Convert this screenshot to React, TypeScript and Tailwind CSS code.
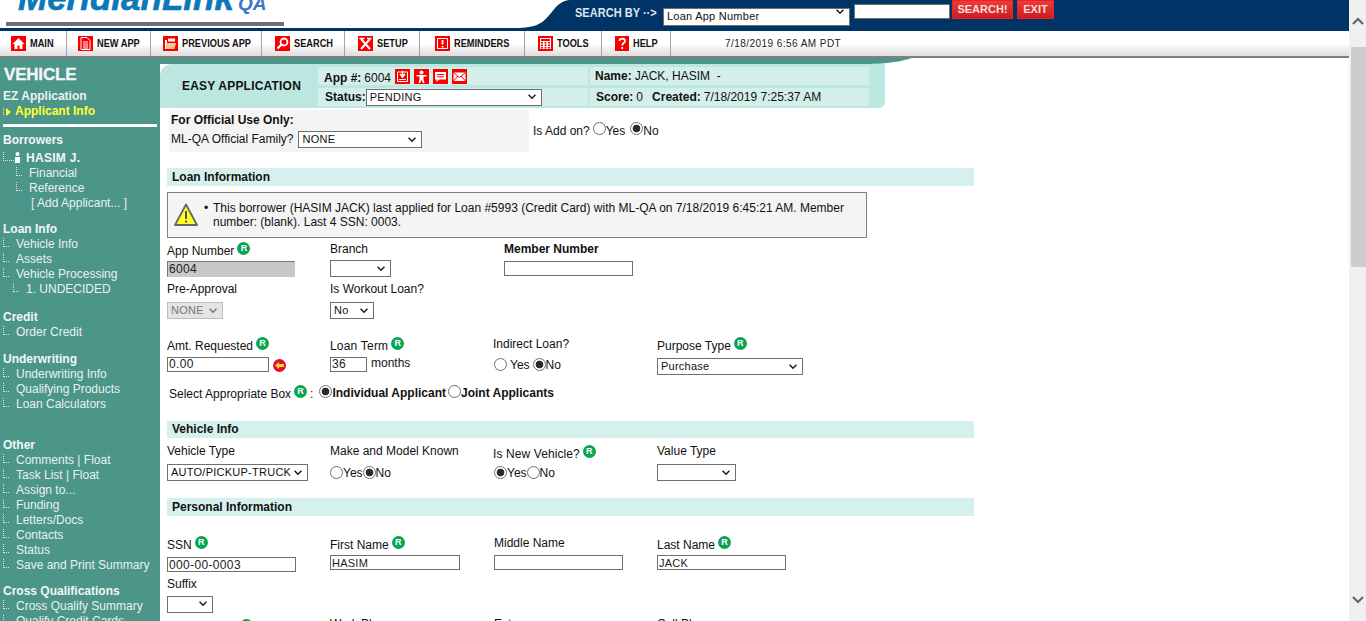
import type { ReactNode } from 'react';

// ----------------------------------------------------------------------------
// Small form bits
// ----------------------------------------------------------------------------

function RBadge({ className = '' }: { className?: string }) {
  return (
    <span
      className={`inline-flex h-[13px] w-[13px] -translate-y-[2px] items-center justify-center rounded-full bg-[#0aa552] text-[9px] font-bold leading-none text-white ${className}`}
    >
      R
    </span>
  );
}

function Label({ children, r, bold, className = '' }: { children: ReactNode; r?: boolean; bold?: boolean; className?: string }) {
  return (
    <div className={`flex h-[14px] items-center gap-[3px] whitespace-nowrap text-xs leading-[14px] text-[#111] ${bold ? 'font-bold' : ''} ${className}`}>
      <span className="translate-y-[1px]">{children}</span>
      {r && <RBadge />}
    </div>
  );
}

function Select({ value, className = '', disabled }: { value: string; className?: string; disabled?: boolean }) {
  return (
    <div className={`relative ${className}`}>
      <select
        disabled={disabled}
        defaultValue={value}
        className={`h-full w-full appearance-none rounded-none border pl-[3px] text-[11px] leading-none tracking-[0.25px] outline-none ${
          disabled ? 'border-[#bdbdbd] bg-[#e4e4e4] text-[#777]' : 'border-[#6f6f6f] bg-white text-[#111]'
        }`}
      >
        <option value={value}>{value}</option>
      </select>
      <svg viewBox="0 0 10 7" className="pointer-events-none absolute right-[5px] top-1/2 h-[6px] w-[10px] -translate-y-1/2" fill="none">
        <path d="M1 1l4 4 4-4" stroke={disabled ? '#777' : '#1a1a1a'} strokeWidth="1.7" />
      </svg>
    </div>
  );
}

function TextInput({ value = '', className = '', gray, digits }: { value?: string; className?: string; gray?: boolean; digits?: boolean }) {
  return (
    <input
      readOnly
      value={value}
      className={`rounded-none border px-[1px] leading-none text-[#222] outline-none ${digits ? 'text-xs tracking-[0.35px]' : 'text-[11px] tracking-[0.25px]'} ${
        gray ? 'border-[#c8c8c8] border-l-[#777] border-t-[#777] bg-[#c8c8c8]' : 'border-[#6f6f6f] bg-white'
      } ${className}`}
    />
  );
}

function Radio({ name, checked, className = '' }: { name: string; checked?: boolean; className?: string }) {
  return (
    <input
      type="radio"
      name={name}
      defaultChecked={checked}
      className={`h-[13px] w-[13px] shrink-0 appearance-none rounded-full border border-[#6f6f6f] bg-white checked:bg-[radial-gradient(circle,#2b2b2b_0,#2b2b2b_3.5px,#fff_4.2px)] ${className}`}
    />
  );
}

function SectionBar({ title, className = '' }: { title: string; className?: string }) {
  return (
    <div className={`w-[807px] bg-[#d6f1ed] pl-[5px] text-xs font-bold text-[#111] ${className}`}>{title}</div>
  );
}

// ----------------------------------------------------------------------------
// Header
// ----------------------------------------------------------------------------

function RedIcon({ children, className = 'w-[15px]' }: { children: ReactNode; className?: string }) {
  return (
    <svg viewBox="0 0 15 15" className={`h-[15px] shrink-0 bg-[#f80000] ${className}`} fill="none">
      {children}
    </svg>
  );
}

const NAV_ITEMS: { label: string; width: string; pad: string; icon: ReactNode }[] = [
  {
    label: 'MAIN',
    width: 'w-[67px]',
    pad: 'pl-[11px]',
    icon: (
      <RedIcon>
        <path d="M7.5 2L1.5 8h2v5h3V9.5h2V13h3V8h2z" fill="#fff" />
      </RedIcon>
    ),
  },
  {
    label: 'NEW APP',
    width: 'w-[84px]',
    pad: 'pl-[11px]',
    icon: (
      <RedIcon>
        <path d="M3 1.5h6l3 3v9H3z" stroke="#fff" />
        <path d="M5 6h5M5 8h5M5 10h5M5 12h5" stroke="#fff" />
      </RedIcon>
    ),
  },
  {
    label: 'PREVIOUS APP',
    width: 'w-[111px]',
    pad: 'pl-[12px]',
    icon: (
      <RedIcon>
        <path d="M2 4h2v9H2z" fill="#fff" />
        <path d="M5 2.5h7v3H5z" fill="#fff" />
        <path d="M3 7h10l-1.5 6H3z" fill="#ffc58a" />
      </RedIcon>
    ),
  },
  {
    label: 'SEARCH',
    width: 'w-[83px]',
    pad: 'pl-[13px]',
    icon: (
      <RedIcon>
        <circle cx="9" cy="6" r="3.5" stroke="#fff" strokeWidth="1.8" />
        <path d="M6.5 8.5L2.5 12.5" stroke="#fff" strokeWidth="2.2" />
      </RedIcon>
    ),
  },
  {
    label: 'SETUP',
    width: 'w-[75px]',
    pad: 'pl-[13px]',
    icon: (
      <RedIcon>
        <path d="M3 3l9 10M12 3L3 13" stroke="#fff" strokeWidth="2" />
        <path d="M1.5 2.5h5M9 2.5h4.5" stroke="#fff" strokeWidth="1.5" />
      </RedIcon>
    ),
  },
  {
    label: 'REMINDERS',
    width: 'w-[105px]',
    pad: 'pl-[15px]',
    icon: (
      <RedIcon>
        <path d="M2.5 2.5h10v10h-10z" stroke="#fff" />
        <path d="M7.5 4v4.5M7.5 10v1.5" stroke="#fff" strokeWidth="1.8" />
      </RedIcon>
    ),
  },
  {
    label: 'TOOLS',
    width: 'w-[77px]',
    pad: 'pl-[13px]',
    icon: (
      <RedIcon>
        <path d="M2 2h11v11H2z" fill="#fff" />
        <path d="M3 3h9v2H3zM3 6h2v1.5H3zM6.5 6h2v1.5h-2zM10 6h2v1.5h-2zM3 8.5h2V10H3zM6.5 8.5h2V10h-2zM10 8.5h2V10h-2zM3 11h2v1.5H3zM6.5 11h2v1.5h-2zM10 11h2v1.5h-2z" fill="#f80000" />
      </RedIcon>
    ),
  },
  {
    label: 'HELP',
    width: 'w-[69px]',
    pad: 'pl-[13px]',
    icon: (
      <svg viewBox="0 0 14 15" className="h-[15px] w-[14px] shrink-0 bg-[#f80000]" fill="none">
        <path d="M4.5 5c0-3.200 5.500-3.200 5.500 0 0 2-2.800 2-2.800 4.500" stroke="#fff" strokeWidth="1.7" />
        <path d="M7.200 11v2" stroke="#fff" strokeWidth="1.8" />
      </svg>
    ),
  },
];

function Header() {
  return (
    <header>
      {/* Logo + search strip */}
      <div className="flex h-[28px]">
        <div className="w-[515px] overflow-hidden">
          <div className="-mt-[24px] flex h-[44px] items-baseline pl-[18px] italic">
            <span className="text-[35px] font-bold leading-[44px] text-[#0b78b8] [-webkit-text-stroke:0.6px_#0b78b8]">MeridianLink</span>
            <span className="ml-[4px] text-[19px] font-bold text-[#3a77c4]">QA</span>
          </div>
          <div className="ml-[6px] mt-[2px] h-[4px] w-[278px] bg-[#6f6f6f]" />
        </div>
        <svg viewBox="0 0 55 28" className="h-[28px] w-[55px]" preserveAspectRatio="none">
          <path d="M0 28C22 28 28 23 36 13 42 5 48 0 55 0V28Z" fill="#003366" />
        </svg>
        <div className="flex flex-1 items-start bg-[#003366]">
          <span className="ml-[5px] mt-[5px] w-[81px] origin-left scale-x-[0.92] whitespace-nowrap text-xs font-bold leading-[16px] text-[#dfe6ee]">SEARCH BY ··&gt;</span>
          <Select value="Loan App Number" className="ml-[7px] mt-[3px] h-[18px] w-[187px]" />
          <TextInput className="ml-[4px] mt-[4px] h-[15px] w-[96px]" />
          <button className="ml-[2px] h-[19px] w-[61px] border border-[#e22] bg-gradient-to-b from-[#ee3a3a] to-[#cc1c1c] text-[11px] font-bold text-[#f5dede]">
            SEARCH!
          </button>
          <button className="ml-[4px] h-[19px] w-[37px] border border-[#e22] bg-gradient-to-b from-[#ee3a3a] to-[#cc1c1c] text-[11px] font-bold text-[#f5dede]">
            EXIT
          </button>
        </div>
      </div>
      <div className="h-[3px] bg-[#003366]" />

      {/* Main nav */}
      <nav className="flex h-[25px] items-center bg-gradient-to-b from-white from-50% to-[#dedede]">
        {NAV_ITEMS.map((item) => (
          <a key={item.label} className={`flex h-full items-center gap-[4px] border-r border-[#a3a3a3] ${item.width} ${item.pad}`}>
            {item.icon}
            <span className="origin-left scale-x-[0.84] whitespace-nowrap text-[11px] font-bold text-[#111]">{item.label}</span>
          </a>
        ))}
        <span className="ml-[54px] whitespace-nowrap text-[10px] tracking-[0.45px] text-[#222]">7/18/2019 6:56 AM PDT</span>
      </nav>
      <div className="h-[2px] bg-[#808080]" />
    </header>
  );
}

// ----------------------------------------------------------------------------
// Sidebar
// ----------------------------------------------------------------------------

type SideItem = { label: string; indent?: 'sub' | 'plain' | 'deep' };

const SIDE_SECTIONS: { title: string; mt: string; items: SideItem[] }[] = [
  { title: 'Loan Info', mt: 'mt-[12px]', items: [{ label: 'Vehicle Info' }, { label: 'Assets' }, { label: 'Vehicle Processing' }, { label: '1. UNDECIDED', indent: 'deep' }] },
  { title: 'Credit', mt: 'mt-[13px]', items: [{ label: 'Order Credit' }] },
  { title: 'Underwriting', mt: 'mt-[12px]', items: [{ label: 'Underwriting Info' }, { label: 'Qualifying Products' }, { label: 'Loan Calculators' }] },
  {
    title: 'Other',
    mt: 'mt-[26px]',
    items: [
      { label: 'Comments | Float' },
      { label: 'Task List | Float' },
      { label: 'Assign to...' },
      { label: 'Funding' },
      { label: 'Letters/Docs' },
      { label: 'Contacts' },
      { label: 'Status' },
      { label: 'Save and Print Summary' },
    ],
  },
  { title: 'Cross Qualifications', mt: 'mt-[11px]', items: [{ label: 'Cross Qualify Summary' }, { label: 'Qualify Credit Cards' }] },
];

function TreeDots({ className = '' }: { className?: string }) {
  return <span className={`mb-[4px] h-[9px] w-[6px] shrink-0 border-b border-l border-dotted border-[#d8e8e4] ${className}`} />;
}

function SideRow({ item }: { item: SideItem }) {
  return (
    <div className={`flex h-[15px] items-center whitespace-nowrap text-xs leading-[15px] text-[#e9f1ef] ${item.indent === 'deep' ? 'pl-[13px]' : 'pl-[3px]'}`}>
      <TreeDots className="mr-[7px]" />
      {item.label}
    </div>
  );
}

function Sidebar() {
  return (
    <aside className="h-[600px] w-[160px] shrink-0 bg-[#4b9589] pt-[6px]">
      <div className="h-[25px] pl-[4px] text-[17px] font-bold leading-[22px] tracking-[-0.2px] text-[#f2f7f6] [-webkit-text-stroke:0.3px_#f2f7f6]">VEHICLE</div>
      <div className="h-[15px] pl-[3px] text-xs font-bold leading-[15px] text-[#eaf3f1]">EZ Application</div>
      <div className="flex h-[15px] items-center pl-[3px] text-xs font-bold leading-[15px] text-[#ffff33]">
        <span className="h-[7px] w-[3px] border-l border-dotted border-[#ffff33]" />
        <span className="mr-[2px] h-0 w-0 border-y-[4px] border-l-[5px] border-y-transparent border-l-[#ffff33]" />
        <span className="ml-[2px]">Applicant Info</span>
      </div>
      <div className="ml-[3px] mt-[5px] h-[3px] w-[154px] bg-white" />

      <div className="mt-[6px] h-[15px] pl-[3px] text-xs font-bold leading-[15px] text-[#f2f7f6]">Borrowers</div>
      <div className="mt-[3px] flex h-[15px] items-center pl-[3px] text-xs font-bold leading-[15px] text-[#f2f7f6]">
        <TreeDots className="w-[11px]" />
        <svg viewBox="0 0 7 11" className="mr-[5px] h-[11px] w-[7px] -translate-y-[1px]" fill="#fff">
          <circle cx="3.500" cy="2" r="2" />
          <path d="M1 5h5v6H1z" />
        </svg>
        <span className="tracking-[0.3px]">HASIM J.</span>
      </div>
      {['Financial', 'Reference'].map((label) => (
        <div key={label} className="flex h-[15px] items-center pl-[16px] text-xs leading-[15px] text-[#e9f1ef]">
          <TreeDots className="mr-[7px]" />
          {label}
        </div>
      ))}
      <div className="h-[14px] pl-[31px] text-xs leading-[14px] text-[#e9f1ef]">[ Add Applicant... ]</div>

      {SIDE_SECTIONS.map((section) => (
        <div key={section.title} className={section.mt}>
          <div className="h-[15px] pl-[3px] text-xs font-bold leading-[15px] text-[#f2f7f6]">{section.title}</div>
          {section.items.map((item) => (
            <SideRow key={item.label} item={item} />
          ))}
        </div>
      ))}
    </aside>
  );
}

// ----------------------------------------------------------------------------
// Application panel header
// ----------------------------------------------------------------------------

function AppIcon({ children }: { children: ReactNode }) {
  return (
    <svg viewBox="0 0 15 15" className="mr-[4px] h-[15px] w-[15px] bg-[#f80000]" fill="none">
      {children}
    </svg>
  );
}

function PanelHeader() {
  return (
    <>
      <svg viewBox="0 0 752 6" className="block h-[6px] w-[752px]" preserveAspectRatio="none">
        <path d="M0 0H752C738 4 728 6 700 6H0Z" fill="#4b9589" />
      </svg>
      <div className="flex h-[44px] w-[725px] rounded-tl-[12px] rounded-br-[6px] bg-[#bce6e0] pt-[3px] text-xs text-[#111]">
        <div className="flex h-[36px] w-[158px] items-center justify-center pl-[5px] pt-[1px] font-bold tracking-[0.2px]">EASY APPLICATION</div>
        <div className="w-[270px]">
          <div className="flex h-[18px] items-center bg-[#d4efe9] pl-[6px]">
            <span className="flex translate-y-[2px]">
              <b>App #:</b>
              <span className="ml-[3px] mr-[4px]">6004</span>
            </span>
            <AppIcon>
              <path d="M2.500 3h10v9.500h-10z" stroke="#fff" />
              <path d="M7.500 2v5M5 5l2.500 3L10 5" stroke="#fff" strokeWidth="1.500" />
              <path d="M4 10.500h7" stroke="#fff" />
            </AppIcon>
            <AppIcon>
              <circle cx="7.500" cy="3.500" r="2" fill="#fff" />
              <path d="M2.500 6h10v1.500h-3v3l1 3.500H9L7.500 11 6 14H4.500l1-3.500v-3h-3z" fill="#fff" />
            </AppIcon>
            <AppIcon>
              <path d="M2 3h11v7.500H6L3.500 13v-2.500H2z" fill="#fff" />
              <path d="M4 5.500h7M4 7.800h7" stroke="#f80000" />
            </AppIcon>
            <AppIcon>
              <path d="M1.500 3.500h12v8.500h-12z" fill="#fff" />
              <path d="M1.500 3.500l6 5 6-5M1.500 12l4.500-5M13.500 12L9 7" stroke="#f80000" />
            </AppIcon>
          </div>
          <div className="mt-[3px] flex h-[18px] items-center bg-[#d4efe9] pl-[7px]">
            <b>Status:</b>
            <Select value="PENDING" className="h-[17px] w-[176px]" />
          </div>
        </div>
        <div className="ml-[2px] w-[279px]">
          <div className="flex h-[18px] items-center bg-[#d4efe9] pl-[5px]">
            <b>Name:</b>
            <span className="ml-[3px] whitespace-pre">JACK, HASIM&nbsp; -</span>
          </div>
          <div className="mt-[3px] flex h-[18px] items-center bg-[#d4efe9] pl-[6px] pb-[1px]">
            <b>Score:</b>
            <span className="ml-[3px]">0</span>
            <b className="ml-[9px]">Created:</b>
            <span className="ml-[3px]">7/18/2019 7:25:37 AM</span>
          </div>
        </div>
      </div>
    </>
  );
}

// ----------------------------------------------------------------------------
// Form
// ----------------------------------------------------------------------------

const FOUR_COLS = 'grid grid-cols-[163px_163px_164px_200px]';

function AppForm() {
  return (
    <div className="pl-[7px] text-xs text-[#111]">
      {/* Official use */}
      <div className="flex">
        <div className="ml-[2px] mt-[2px] h-[42px] w-[360px] bg-[#f4f4f4] pl-[2px] pt-[2px]">
          <div className="h-[14px] pt-[1px] font-bold leading-[14px]">For Official Use Only:</div>
          <div className="mt-[5px] flex items-center">
            <span className="-translate-y-[1px]">ML-QA Official Family?</span>
            <Select value="NONE" className="ml-[5px] h-[17px] w-[124px]" />
          </div>
        </div>
        <div className="ml-[4px] mt-[15px] flex h-[14px] items-center">
          <span className="translate-y-[1px]">Is Add on?</span>
          <Radio name="addon" className="ml-[3px] -translate-y-[2px]" />
          <span className="translate-y-[1px]">Yes</span>
          <Radio name="addon" checked className="ml-[5px] -translate-y-[2px]" />
          <span className="translate-y-[1px]">No</span>
        </div>
      </div>

      {/* Loan info */}
      <SectionBar title="Loan Information" className="mt-[16px] h-[18px] leading-[18px]" />
      <div className="mt-[6px] flex h-[46px] w-[700px] border border-[#7f7f7f] bg-[#f4f4f4] pl-[6px] pt-[10px]">
        <svg viewBox="0 0 24 24" className="h-[24px] w-[24px] shrink-0">
          <path d="M12 1.500L23 22H1z" fill="#ffff22" stroke="#666" strokeWidth="1.800" strokeLinejoin="round" />
          <path d="M12 8v8M12 17.500v2" stroke="#555" strokeWidth="2" />
        </svg>
        <div className="ml-[6px] -mt-[2px] flex leading-[14px]">
          <span className="w-[9px]">•</span>
          <p className="w-[650px]">
            This borrower (HASIM JACK) last applied for Loan #5993 (Credit Card) with ML-QA on 7/18/2019 6:45:21 AM. Member number: (blank). Last 4 SSN: 0003.
          </p>
        </div>
      </div>

      <div className={`${FOUR_COLS} h-[43px]`}>
        <div className="pt-[5px]">
          <Label r>App Number</Label>
          <TextInput gray digits value="6004" className="mt-[4px] h-[16px] w-[128px]" />
        </div>
        <div className="pt-[3px]">
          <Label>Branch</Label>
          <Select value="" className="mt-[5px] h-[17px] w-[61px]" />
        </div>
        <div className="ml-[11px] pt-[3px]">
          <Label bold>Member Number</Label>
          <TextInput className="mt-[6px] h-[15px] w-[129px]" />
        </div>
      </div>

      <div className={`${FOUR_COLS} h-[55px]`}>
        <div>
          <Label>Pre-Approval</Label>
          <Select disabled value="NONE" className="mt-[7px] h-[17px] w-[56px]" />
        </div>
        <div>
          <Label>Is Workout Loan?</Label>
          <Select value="No" className="mt-[7px] h-[17px] w-[44px]" />
        </div>
      </div>

      <div className={`${FOUR_COLS} h-[50px]`}>
        <div className="pt-[2px]">
          <Label r>Amt. Requested</Label>
          <div className="mt-[4px] flex items-center">
            <TextInput digits value="0.00" className="h-[15px] w-[102px]" />
            <svg viewBox="0 0 13 13" className="ml-[4px] mt-[3px] h-[13px] w-[13px]">
              <circle cx="6.500" cy="6.500" r="6.500" fill="#e0102c" />
              <path d="M2 6.500L6 3v2h5v3H6v2z" fill="#ffd83a" />
            </svg>
          </div>
        </div>
        <div className="pt-[2px]">
          <Label r className="tracking-[0.2px]">Loan Term</Label>
          <div className="mt-[4px] flex items-center">
            <TextInput digits value="36" className="h-[15px] w-[37px]" />
            <span className="ml-[4px] -translate-y-[1px]">months</span>
          </div>
        </div>
        <div>
          <Label>Indirect Loan?</Label>
          <div className="ml-[1px] mt-[5px] flex items-center">
            <Radio name="indirect" />
            <span className="ml-[3px] mt-[2px]">Yes</span>
            <Radio name="indirect" checked className="ml-[3px]" />
            <span className="mt-[2px]">No</span>
          </div>
        </div>
        <div className="pt-[2px]">
          <Label r>Purpose Type</Label>
          <Select value="Purchase" className="mt-[6px] h-[17px] w-[146px]" />
        </div>
      </div>

      <div className="ml-[2px] flex h-[14px] items-center">
        <span className="pt-[1px]">Select Appropriate Box</span>
        <RBadge className="ml-[3px]" />
        <span className="ml-[3px] pt-[2px]">:</span>
        <Radio name="applicant" checked className="ml-[6px] -translate-y-[2px]" />
        <b>Individual Applicant</b>
        <Radio name="applicant" className="ml-[2px] -translate-y-[2px]" />
        <b>Joint Applicants</b>
      </div>

      {/* Vehicle info */}
      <SectionBar title="Vehicle Info" className="mt-[21px] h-[17px] leading-[17px]" />
      <div className={`${FOUR_COLS} h-[60px]`}>
        <div className="pt-[5px]">
          <Label>Vehicle Type</Label>
          <Select value="AUTO/PICKUP-TRUCK" className="mt-[7px] h-[17px] w-[141px]" />
        </div>
        <div className="pt-[5px]">
          <Label>Make and Model Known</Label>
          <div className="mt-[6px] flex items-center">
            <Radio name="known" />
            <span className="mt-[2px]">Yes</span>
            <Radio name="known" checked />
            <span className="mt-[2px]">No</span>
          </div>
        </div>
        <div className="pt-[8px]">
          <Label r className="tracking-[0.1px]">Is New Vehicle?</Label>
          <div className="ml-[1px] mt-[3px] flex items-center">
            <Radio name="isnew" checked />
            <span className="mt-[2px]">Yes</span>
            <Radio name="isnew" />
            <span className="mt-[2px]">No</span>
          </div>
        </div>
        <div className="pt-[5px]">
          <Label>Value Type</Label>
          <Select value="" className="mt-[7px] h-[17px] w-[79px]" />
        </div>
      </div>

      {/* Personal info */}
      <SectionBar title="Personal Information" className="h-[18px] leading-[18px]" />
      <div className={`${FOUR_COLS} h-[100px]`}>
        <div className="pt-[21px]">
          <Label r>SSN</Label>
          <TextInput digits value="000-00-0003" className="mt-[6px] h-[15px] w-[129px]" />
          <Label className="mt-[3px]">Suffix</Label>
          <Select value="" className="mt-[6px] h-[17px] w-[46px]" />
        </div>
        <div className="pt-[21px]">
          <Label r>First Name</Label>
          <TextInput value="HASIM" className="mt-[4px] h-[15px] w-[130px]" />
        </div>
        <div className="ml-[1px] pt-[19px]">
          <Label>Middle Name</Label>
          <TextInput className="mt-[6px] h-[15px] w-[129px]" />
        </div>
        <div className="pt-[21px]">
          <Label r>Last Name</Label>
          <TextInput value="JACK" className="mt-[4px] h-[15px] w-[129px]" />
        </div>
      </div>
      <div className={FOUR_COLS}>
        <div className="pt-[4px]">
          <Label r>Home Phone</Label>
        </div>
        <Label>Work Phone</Label>
        <Label className="ml-[1px]">Extn</Label>
        <Label>Cell Phone</Label>
      </div>
    </div>
  );
}

// ----------------------------------------------------------------------------
// Page
// ----------------------------------------------------------------------------

export default function App() {
  return (
    <div className="flex h-[621px] w-[1366px] overflow-hidden bg-white font-['Liberation_Sans',Arial,sans-serif]">
      <div className="w-[1349px] shrink-0">
        <Header />
        <div className="flex">
          <Sidebar />
          <main className="flex-1">
            <PanelHeader />
            <AppForm />
          </main>
        </div>
      </div>

      {/* Scrollbar */}
      <div className="flex w-[17px] flex-col items-center bg-[#f0f0f0]">
        <svg viewBox="0 0 12 8" className="mt-[17px] h-[8px] w-[12px]" fill="none">
          <path d="M1 7l5-5 5 5" stroke="#666" strokeWidth="2.200" />
        </svg>
        <div className="ml-[1px] mt-[22px] h-[220px] w-[15px] bg-[#cdcdcd]" />
        <svg viewBox="0 0 12 8" className="mt-[329px] h-[8px] w-[12px]" fill="none">
          <path d="M1 1l5 5 5-5" stroke="#666" strokeWidth="2.200" />
        </svg>
      </div>
    </div>
  );
}
